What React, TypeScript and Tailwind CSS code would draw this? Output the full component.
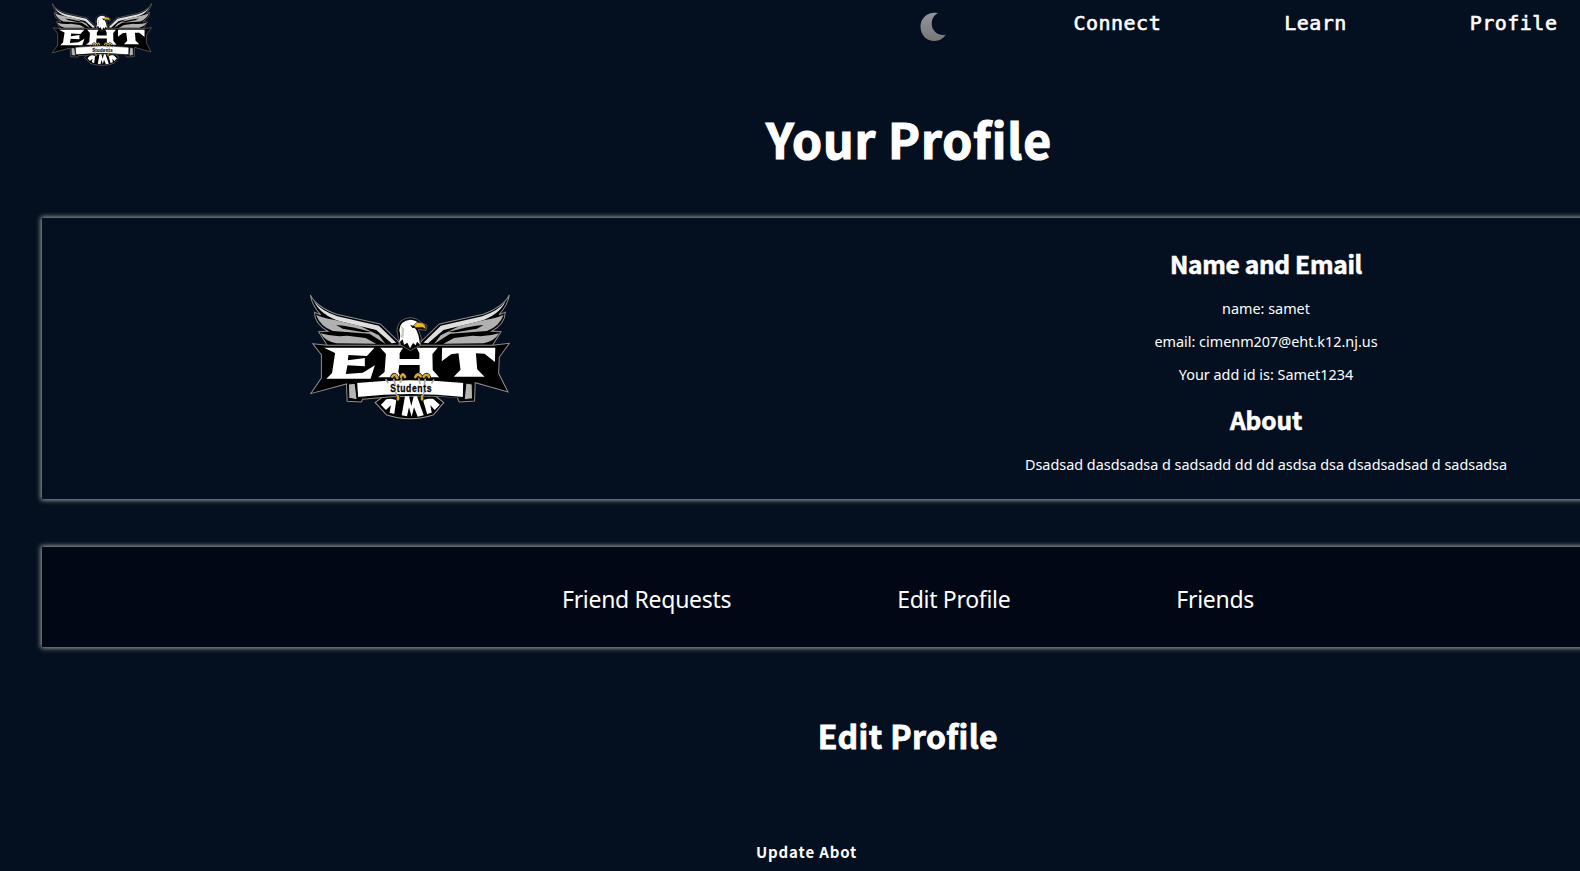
import React from "react";

function EagleLogo({ className }: { className: string }) {
  return (
    <svg viewBox="30 26 598 378" className={className} preserveAspectRatio="none" role="img" aria-label="EHT Students">
      <defs>
        <g id="wing">
          <path d="M31 29 Q48 64 110 87 L240 116 L296 170 L300 196 L236 184 L84 184 L56 139 L84 138 Q44 116 43 81 L62 88 Q36 60 31 29Z" fill="#000" stroke="#8d8d8d" strokeWidth="3" />
          <path d="M42 48 Q62 76 112 93 L236 121 L288 172 L274 174 L228 134 L120 108 Q62 90 42 48Z" fill="#dedede" />
          <path d="M48 88 Q66 97 108 105 L180 122 L236 150 L256 176 L208 145 L98 137 Q60 122 48 88Z" fill="#b0b0b0" />
          <path d="M108 119 Q150 122 214 140 L190 141 L128 130Z" fill="#000" />
          <path d="M62 144 Q100 156 142 151 L196 158 L228 175 L108 174 Q74 167 62 144Z" fill="#b0b0b0" />
        </g>
      </defs>
      <use href="#wing" />
      <use href="#wing" transform="translate(657 0) scale(-1 1)" />
      <path d="M225 352 L258 388 Q330 412 400 388 L430 352 L390 320 L266 320Z" fill="#000" stroke="#999" strokeWidth="3" />
      <path d="M38 175 L82 180 L575 180 L626 174 L596 216 L594 264 L622 320 L524 292 L522 347 L476 350 L470 336 Q330 326 187 342 L184 350 L141 348 L139 296 L32 325 L64 278 L64 208Z" fill="#000" stroke="#8d8d8d" strokeWidth="3" />
      <path d="M72 187 H223 L200 212 L145 209 L143 225 L194 218 V243 L142 240 L137 266 L188 262 L224 240 L211 280 H79 L96 263 L105 203Z" fill="#fff" />
      <path d="M240 187 H308 L298 204 V221 H357 V204 L349 187 H412 L396 206 L397 254 L416 276 H351 L358 259 V239 H297 L294 260 L302 276 H234 L253 260 L257 206Z" fill="#fff" />
      <path d="M425 187 H584 L583 230 L552 205 L526 204 L530 252 L552 274 H460 L480 253 L474 204 L452 207 L424 228Z" fill="#fff" />
      <path d="M145 296 L165 294 L171 343 L146 339Z M515 296 L496 293 L491 343 L516 340Z" fill="#b4b4b4" stroke="#000" strokeWidth="3" />
      <path d="M169 291 Q330 275 490 291 L489 337 Q330 319 172 337Z" fill="#fff" stroke="#000" strokeWidth="4" />
      <path d="M242 358 L258 342 L272 340 L288 344 L282 386 L268 382 L272 360 L257 374Z M304 390 L314 333 L326 333 L333 362 L340 333 L350 333 L370 390 L352 394 L341 366 L334 394 L326 366 L320 393Z M368 344 L384 340 L398 340 L418 358 L403 374 L390 360 L394 382 L380 386Z" fill="#fff" />
      <path d="M302 180 Q292 158 290 135 Q293 98 332 97 Q351 98 362 111 L380 120 L377 135 L354 132 L363 158 L360 180 L330 196Z" fill="#000" stroke="#888" strokeWidth="2" />
      <path d="M296 172 Q303 153 297 135 Q300 105 330 103 Q349 104 357 116 L337 122 L346 131 Q355 143 359 178 L350 169 L346 180 L338 173 L329 189 L321 172 L311 178 L307 162Z" fill="#fff" />
      <path d="M301 155 Q308 137 301 120 L312 130 L309 158Z" fill="#c7c7c7" />
      <path d="M329 118 L346 124 L337 129Z" />
      <path d="M340 120 L350 111 L367 113 Q377 119 376 132 L366 126 L346 127Z" fill="#edb91b" stroke="#302405" strokeWidth="2" />
      <text transform="translate(270 319) scale(0.8 1)" textLength="154" lengthAdjust="spacing" fontFamily="Liberation Sans" fontWeight="700" fontSize="32" fill="#050505" stroke="#050505" strokeWidth="1">Students</text>
      <g fill="none" stroke="#000" strokeWidth="12" strokeLinecap="round">
        <path d="M276 274 Q284 261 291 278 M302 274 Q308 259 314 275 M345 275 Q352 260 361 273 M370 274 Q380 262 386 275 M293 333 V342 M365 333 V342" />
      </g>
      <g fill="none" stroke="#dba91c" strokeWidth="8" strokeLinecap="round">
        <path d="M276 274 Q284 261 291 278 M302 274 Q308 259 314 275 M345 275 Q352 260 361 273 M370 274 Q380 262 386 275 M293 333 V342 M365 333 V342" />
      </g>
      <path d="M256 282 L264 294 M280 280 L285 298 M304 279 L300 292 M355 279 L359 296 M375 280 L372 298 M401 282 L393 295 M285 319 L290 331 M372 319 L367 331" fill="none" stroke="#aaa" strokeWidth="5" />
    </svg>
  );
}

const heading = "font-['Noto_Sans_CJK_JP',sans-serif] font-bold [font-variant-ligatures:none]";
const navLinks = ["Connect", "Learn", "Profile"];

export default function App() {
  return (
    <div className="h-[871px] w-full overflow-hidden bg-[#04101f] font-['Noto_Sans',sans-serif] text-white">
      <header className="flex h-[68px] items-start pl-[52px]">
        <EagleLogo className="mt-[3px] h-[63px] w-[100px] shrink-0" />
        <svg viewBox="0 0 26 29" className="ml-[768px] mt-[12px] h-[29px] w-[26px] shrink-0">
          <defs>
            <linearGradient id="moon" x2="0" y2="1">
              <stop stopColor="#92959a" />
              <stop offset="1" stopColor="#777" />
            </linearGradient>
          </defs>
          <path d="M17.8 1.2 C8.5 -.8 .5 6 .5 14.5 C.5 23 6.500 29 14.500 29 C19.500 29 23.500 26.500 25.700 22.800 C18 24 11.700 19 11.700 11.500 C11.700 7 14 3 17.800 1.200Z" fill="url(#moon)" />
        </svg>
        <nav className="ml-[127.5px] mt-[7px] flex gap-[123px] font-['DejaVu_Sans_Mono',monospace] text-[20px] leading-[32px] tracking-[0.48px]">
          {navLinks.map((label) => (
            <a key={label} className="[-webkit-text-stroke:0.6px_white]">{label}</a>
          ))}
        </nav>
      </header>

      <main className="ml-[42px] w-[1732px]">
        <h1 className={`${heading} mt-[30px] pl-[2px] text-center text-[48px] leading-[80px] tracking-[0.9px] [-webkit-text-stroke:1.2px_white]`}>Your Profile</h1>

        <section className="mt-[40px] flex h-[281px] shadow-[0_0_5px_1px_#aaa]">
          <div className="flex w-[736px] items-center justify-center pb-[4px]">
            <EagleLogo className="h-[126px] w-[200px]" />
          </div>
          <div className="ml-[120px] w-[736px] pt-[26px] text-center text-[14.4px]">
            <h2 className={`${heading} text-[24.5px] leading-[40px] tracking-[-0.3px] [-webkit-text-stroke:0.6px_white]`}>Name and Email</h2>
            <p className="mt-[8px] leading-[33px]">name: samet</p>
            <p className="leading-[33px]">email: cimenm207@eht.k12.nj.us</p>
            <p className="leading-[33px]">Your add id is: Samet1234</p>
            <h2 className={`${heading} mt-[9px] text-[24.5px] leading-[40px] tracking-[-0.1px] [-webkit-text-stroke:0.6px_white]`}>About</h2>
            <p className="mt-[8px] leading-[33px]">Dsadsad dasdsadsa d sadsadd dd dd asdsa dsa dsadsadsad d sadsadsa</p>
          </div>
        </section>

        <section className="mt-[48px] flex h-[100px] items-center justify-center gap-[166px] bg-[#020715] pt-[4px] text-[23px] tracking-[-0.3px] shadow-[0_0_5px_1px_#aaa]">
          <a>Friend Requests</a>
          <a>Edit Profile</a>
          <a>Friends</a>
        </section>

        <h2 className={`${heading} mt-[62px] text-center text-[32px] leading-[52px] tracking-[0.4px] [-webkit-text-stroke:0.8px_white]`}>Edit Profile</h2>
        <div className={`${heading} ml-[714px] mt-[77px] text-[15px] leading-[28px] tracking-[0.85px]`}>Update Abot</div>
      </main>
    </div>
  );
}
